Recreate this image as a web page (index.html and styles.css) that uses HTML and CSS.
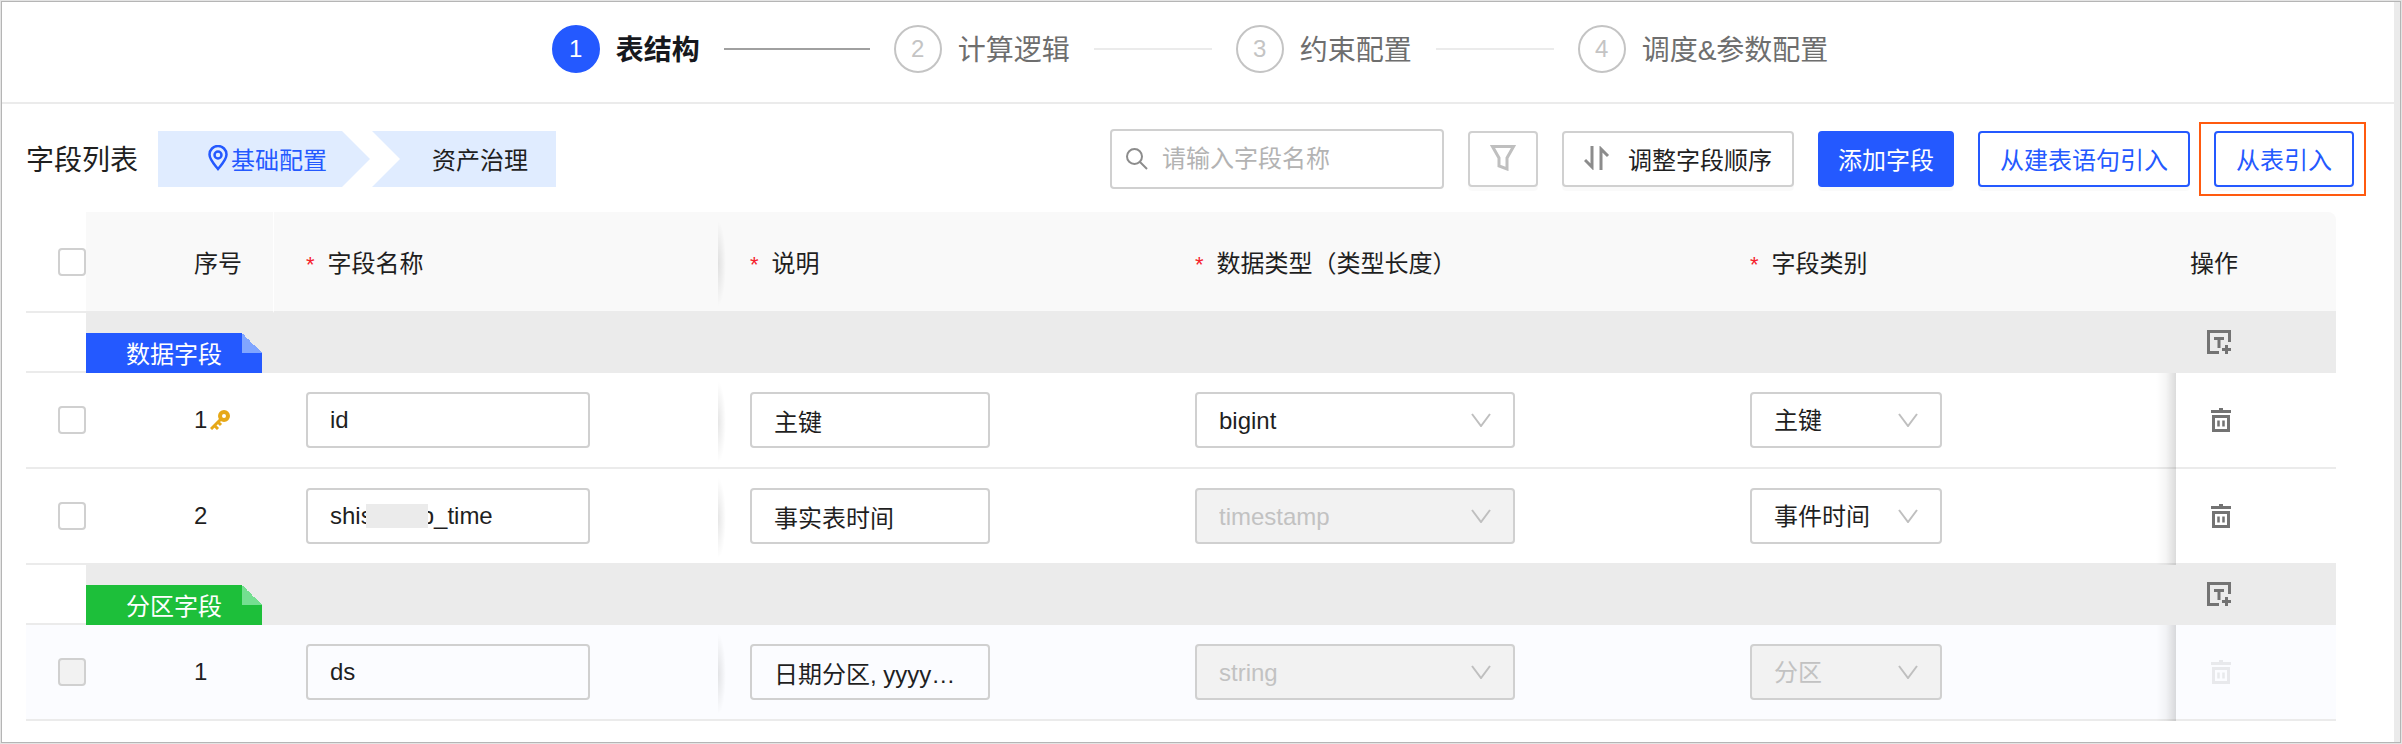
FILE: index.html
```html
<!DOCTYPE html>
<html lang="zh-CN">
<head>
    <meta charset="UTF-8">
    <meta name="viewport" content="width=device-width, initial-scale=1.0">
    <title>表结构</title>
    <link rel="stylesheet" href="styles.css">
</head>
<body>
    <!-- Shared icons -->
    <svg class="sprite" aria-hidden="true">
        <symbol id="icon-chevron" viewBox="0 0 20 14">
            <path d="M1 1l9 12 9-12" fill="none" stroke="currentColor" stroke-width="2"/>
        </symbol>
        <symbol id="icon-trash" viewBox="0 0 22 24">
            <path d="M1 3.500h20M3.500 8.500V22.500h15V8.500z" fill="none" stroke="currentColor" stroke-width="3"/>
            <path d="M8.500 12.500v6M13.500 12.500v6" fill="none" stroke="currentColor" stroke-width="2.500"/>
            <path d="M9 0h4v4h-4z" fill="currentColor"/>
        </symbol>
        <symbol id="icon-insert" viewBox="0 0 24 24">
            <path d="M12 22.500H1.500V1.500h21V12M7 8.500h10M12 8v10M19.500 15v9M15 19.500h9" fill="none" stroke="currentColor" stroke-width="3"/>
        </symbol>
    </svg>

    <main class="panel">
        <ol class="steps">
            <li class="step active"><span class="step-number">1</span><span class="step-title">表结构</span></li>
            <li class="step"><span class="step-number">2</span><span class="step-title">计算逻辑</span></li>
            <li class="step"><span class="step-number">3</span><span class="step-title">约束配置</span></li>
            <li class="step"><span class="step-number">4</span><span class="step-title">调度&amp;参数配置</span></li>
        </ol>

        <div class="toolbar">
            <h1>字段列表</h1>
            <nav class="crumbs">
                <a href="#base" class="crumb current">
                    <svg width="20" height="26" viewBox="0 0 20 26" fill="none" stroke="currentColor" stroke-width="2.500">
                        <path d="M10 24C6 19 1.500 14.500 1.500 9.500a8.500 8.500 0 0 1 17 0C18.500 14.500 14 19 10 24z"/>
                        <circle cx="10" cy="10" r="3.500"/>
                    </svg>基础配置</a>
                <a href="#asset" class="crumb">资产治理</a>
            </nav>
            <div class="actions">
                <label class="search">
                    <svg width="22" height="22" viewBox="0 0 22 22" fill="none" stroke="currentColor" stroke-width="2">
                        <circle cx="8.500" cy="8.500" r="7.500"/>
                        <path d="M14 14l7 7"/>
                    </svg>
                    <input type="text" placeholder="请输入字段名称" aria-label="请输入字段名称">
                </label>
                <button class="button icon-only" aria-label="筛选">
                    <svg width="26" height="26" viewBox="0 0 26 26" fill="none" stroke="currentColor" stroke-width="3">
                        <path d="M2.500 1.500h21L17 13v11l-8-3v-8z"/>
                    </svg>
                </button>
                <button class="button">
                    <svg width="26" height="24" viewBox="0 0 26 24" fill="none" stroke="currentColor" stroke-width="3">
                        <path d="M1 14l7 7V0M17 24V3l7 7"/>
                    </svg>调整字段顺序</button>
                <button class="button primary">添加字段</button>
                <button class="button outline">从建表语句引入</button>
                <div class="highlight">
                    <button class="button outline">从表引入</button>
                </div>
            </div>
        </div>

        <div class="table-wrap">
            <table>
                <colgroup>
                    <col class="col-check">
                    <col class="col-index">
                    <col class="col-name">
                    <col class="col-desc">
                    <col class="col-type">
                    <col>
                    <col class="col-action">
                </colgroup>
                <thead>
                    <tr>
                        <th class="check"><input type="checkbox" aria-label="全选"></th>
                        <th class="index">序号</th>
                        <th class="name required">字段名称</th>
                        <th class="required">说明</th>
                        <th class="required">数据类型（类型长度）</th>
                        <th class="required">字段类别</th>
                        <th class="action">操作</th>
                    </tr>
                </thead>
                <tbody>
                    <tr class="group">
                        <td class="check"></td>
                        <td colspan="5" class="group-cell"><span class="tag">数据字段</span></td>
                        <td class="action"><button class="icon-button insert" aria-label="插入数据字段"><svg width="24" height="24"><use href="#icon-insert"/></svg></button></td>
                    </tr>
                    <tr>
                        <td class="check"><input type="checkbox" aria-label="选择 id"></td>
                        <td class="index">1<svg class="key" width="20" height="20" viewBox="0 0 20 20" fill="none" stroke="currentColor" stroke-width="4">
                            <circle cx="14" cy="6" r="4"/>
                            <path d="M11 9L1 19M4 15l4 4M8 12l3 3" stroke-width="3"/>
                        </svg></td>
                        <td class="name"><input type="text" class="field" value="id" aria-label="字段名称"></td>
                        <td><input type="text" class="field short" value="主键" aria-label="说明"></td>
                        <td><span class="select wide"><select aria-label="数据类型"><option>bigint</option></select><svg width="20" height="14"><use href="#icon-chevron"/></svg></span></td>
                        <td><span class="select"><select aria-label="字段类别"><option>主键</option></select><svg width="20" height="14"><use href="#icon-chevron"/></svg></span></td>
                        <td class="action"><button class="icon-button" aria-label="删除"><svg width="22" height="24"><use href="#icon-trash"/></svg></button></td>
                    </tr>
                    <tr>
                        <td class="check"><input type="checkbox" aria-label="选择 2"></td>
                        <td class="index">2</td>
                        <td class="name"><div class="masked"><input type="text" class="field" value="shisxxxxb_time" aria-label="字段名称"><span class="mask"></span></div></td>
                        <td><input type="text" class="field short" value="事实表时间" aria-label="说明"></td>
                        <td><span class="select wide"><select disabled aria-label="数据类型"><option>timestamp</option></select><svg width="20" height="14"><use href="#icon-chevron"/></svg></span></td>
                        <td><span class="select"><select aria-label="字段类别"><option>事件时间</option></select><svg width="20" height="14"><use href="#icon-chevron"/></svg></span></td>
                        <td class="action"><button class="icon-button" aria-label="删除"><svg width="22" height="24"><use href="#icon-trash"/></svg></button></td>
                    </tr>
                    <tr class="group">
                        <td class="check"></td>
                        <td colspan="5" class="group-cell"><span class="tag green">分区字段</span></td>
                        <td class="action"><button class="icon-button insert" aria-label="插入分区字段"><svg width="24" height="24"><use href="#icon-insert"/></svg></button></td>
                    </tr>
                    <tr class="partition">
                        <td class="check"><input type="checkbox" disabled aria-label="选择 ds"></td>
                        <td class="index">1</td>
                        <td class="name"><input type="text" class="field" value="ds" aria-label="字段名称"></td>
                        <td><input type="text" class="field short" value="日期分区, yyyymmdd" aria-label="说明"></td>
                        <td><span class="select wide"><select disabled aria-label="数据类型"><option>string</option></select><svg width="20" height="14"><use href="#icon-chevron"/></svg></span></td>
                        <td><span class="select"><select disabled aria-label="字段类别"><option>分区</option></select><svg width="20" height="14"><use href="#icon-chevron"/></svg></span></td>
                        <td class="action"><button class="icon-button" disabled aria-label="删除"><svg width="22" height="24"><use href="#icon-trash"/></svg></button></td>
                    </tr>
                </tbody>
            </table>
        </div>
    </main>
</body>
</html>
```
FILE: styles.css
```css
* {
    box-sizing: border-box;
}

body {
    margin: 0;
    padding: 1px;
    background: #e4e4e4;
    color: #1f1f1f;
    font-family: "Liberation Sans", "Noto Sans CJK SC", sans-serif;
    font-size: 24px;
}

button,
input,
select {
    font: inherit;
    color: inherit;
}

.sprite {
    position: absolute;
    width: 0;
    height: 0;
}

.panel {
    background: #fff;
    border: 1px solid #b5b5b5;
    box-shadow: inset -6px 0 0 #ebebeb;
    padding: 0 6px 21px 0;
}

/* Steps */
.steps {
    display: flex;
    justify-content: center;
    margin: 0;
    padding: 23px 16px 29px 0;
    list-style: none;
    border-bottom: 2px solid #ebebeb;
}

.step {
    display: flex;
    align-items: center;
    width: 342px;
    height: 48px;
    color: #6e6e6e;
    font-size: 28px;
    white-space: nowrap;
}

.step:last-child {
    width: auto;
}

.step-number {
    display: flex;
    align-items: center;
    justify-content: center;
    flex: none;
    width: 48px;
    height: 48px;
    margin-right: 16px;
    border: 2px solid #c4c4c4;
    border-radius: 50%;
    color: #c4c4c4;
    font-size: 24px;
}

.step-title {
    padding-bottom: 2px;
}

.step:not(:last-child)::after {
    content: "";
    flex: 1;
    height: 2px;
    margin: 0 24px;
    background: #ebebeb;
}

.step.active {
    color: #16181d;
    font-weight: bold;
}

.step.active .step-number {
    background: #2459ff;
    border-color: #2459ff;
    color: #fff;
    font-weight: normal;
}

.step.active::after {
    background: #a0a0a0;
}

/* Toolbar */
.toolbar {
    display: flex;
    align-items: center;
    padding: 18px 28px 16px 24px;
}

.toolbar h1 {
    margin: 0 20px 0 0;
    padding-bottom: 2px;
    font-size: 28px;
    font-weight: normal;
    white-space: nowrap;
}

.crumbs {
    display: flex;
    gap: 2px;
}

.crumb {
    display: flex;
    align-items: center;
    gap: 3px;
    height: 56px;
    padding: 0 28px 2px 60px;
    background: #e0ecff;
    color: #1f1f1f;
    text-decoration: none;
    white-space: nowrap;
    clip-path: polygon(0 0, 100% 0, 100% 100%, 0 100%, 28px 50%);
}

.crumb.current {
    padding: 0 43px 2px 50px;
    color: #2459ff;
    clip-path: polygon(0 0, calc(100% - 28px) 0, 100% 50%, calc(100% - 28px) 100%, 0 100%);
}

.actions {
    display: flex;
    align-items: center;
    gap: 24px;
    margin-left: auto;
}

.search {
    display: flex;
    align-items: center;
    gap: 14px;
    width: 334px;
    height: 60px;
    padding: 0 14px;
    border: 2px solid #d0d0d0;
    border-radius: 4px;
    color: #8c8c8c;
}

.search svg {
    flex: none;
}

.search input {
    flex: 1;
    min-width: 0;
    padding: 0;
    border: 0;
    outline: none;
    background: none;
    color: #1f1f1f;
}

.search input::placeholder {
    color: #b3b3b3;
}

.button {
    display: flex;
    align-items: center;
    justify-content: center;
    gap: 18px;
    height: 56px;
    padding: 0 20px 2px;
    border: 2px solid #d0d0d0;
    border-radius: 4px;
    background: #fff;
    box-shadow: 0 4px 0 rgba(0, 0, 0, 0.02);
    white-space: nowrap;
    cursor: pointer;
}

.button svg {
    color: #8c8c8c;
}

.button.icon-only svg {
    color: #bfbfbf;
}

.button.primary {
    padding: 0 18px 2px;
    background: #2459ff;
    border-color: #2459ff;
    color: #fff;
}

.button.outline {
    border-color: #2459ff;
    color: #2459ff;
}

.highlight {
    margin-left: -15px;
    padding: 7px 10px 7px 13px;
    border: 2px solid #ff5a0f;
}

/* Field table */
.table-wrap {
    margin: 0 58px 0 24px;
    overflow-x: auto;
}

table {
    width: 100%;
    min-width: 2080px;
    table-layout: fixed;
    border-collapse: separate;
    border-spacing: 0;
}

.col-check {
    width: 60px;
}

.col-index {
    width: 188px;
}

.col-name {
    width: 444px;
}

.col-desc {
    width: 445px;
}

.col-type {
    width: 555px;
}

.col-action {
    width: 160px;
}

th,
td {
    height: 96px;
    padding: 0 32px;
    border-bottom: 2px solid #ebebeb;
    text-align: left;
    font-weight: normal;
}

th {
    height: 101px;
    background: #f9f9f9;
}

th:last-child {
    border-top-right-radius: 8px;
}

.required::before {
    content: "*";
    margin-right: 13px;
    color: #f5222d;
    font-size: 22px;
}

.check {
    padding: 0;
    background: #fff;
    text-align: right;
}

.index {
    padding: 0 0 0 108px;
}

th.index {
    border-right: 1px solid #fff;
}

.key {
    margin-left: 3px;
    vertical-align: -2px;
    color: #e6a817;
}

.name {
    position: relative;
}

.name::after {
    content: "";
    position: absolute;
    top: 8px;
    bottom: 4px;
    left: 100%;
    width: 8px;
    background: radial-gradient(ellipse at left, rgba(0, 0, 0, 0.1), rgba(0, 0, 0, 0) 70%);
}

.action {
    position: sticky;
    right: 0;
    background: #fff;
    padding: 0 14px;
}

th.action {
    background: #f9f9f9;
}

tr:not(.group) td.action::before {
    content: "";
    position: absolute;
    top: 0;
    bottom: -2px;
    right: 100%;
    width: 20px;
    background: linear-gradient(to left, rgba(0, 0, 0, 0.14), rgba(0, 0, 0, 0.04) 50%, rgba(0, 0, 0, 0));
}

.group td {
    height: 60px;
}

.group .group-cell,
.group .action {
    background: #ebebeb;
}

.group .group-cell {
    padding: 20px 0 0;
    border-bottom: 0;
    vertical-align: bottom;
}

.tag {
    display: flex;
    align-items: center;
    width: 176px;
    height: 40px;
    padding: 0 0 2px 40px;
    background: linear-gradient(to top right, #80a5ff 50%, #ebebeb 50%) top right / 20px 20px no-repeat, #2459ff;
    color: #fff;
}

.tag.green {
    background: linear-gradient(to top right, #74df90 50%, #ebebeb 50%) top right / 20px 20px no-repeat, #1dbf3a;
}

.partition td {
    background: #fbfcff;
}

input[type="checkbox"] {
    appearance: none;
    display: block;
    width: 28px;
    height: 28px;
    margin: 0 0 0 auto;
    border: 2px solid #d0d0d0;
    border-radius: 4px;
    background: #fff;
}

input[type="checkbox"]:disabled {
    background: #f2f2f2;
}

.field {
    display: block;
    width: 284px;
    height: 56px;
    padding: 0 22px;
    border: 2px solid #d0d0d0;
    border-radius: 4px;
    background: transparent;
    text-overflow: ellipsis;
}

.field.short {
    width: 240px;
}

.masked {
    position: relative;
}

.mask {
    position: absolute;
    top: 16px;
    left: 60px;
    width: 62px;
    height: 24px;
    background: #ebebeb;
}

.select {
    position: relative;
    display: block;
    width: 192px;
}

.select.wide {
    width: 320px;
}

.select select {
    appearance: none;
    display: block;
    width: 100%;
    height: 56px;
    padding: 0 56px 0 22px;
    border: 2px solid #d0d0d0;
    border-radius: 4px;
    background: #fff;
}

.select select:disabled {
    background: #f2f2f2;
    color: #c2c2c2;
    opacity: 1;
}

.select svg {
    position: absolute;
    top: 21px;
    right: 24px;
    color: #bfbfbf;
    pointer-events: none;
}

.icon-button {
    display: flex;
    padding: 0;
    margin-left: 20px;
    border: 0;
    background: none;
    color: #737373;
}

.icon-button.insert {
    margin-left: 17px;
}

.icon-button:disabled {
    color: #e8e9ec;
}
```
